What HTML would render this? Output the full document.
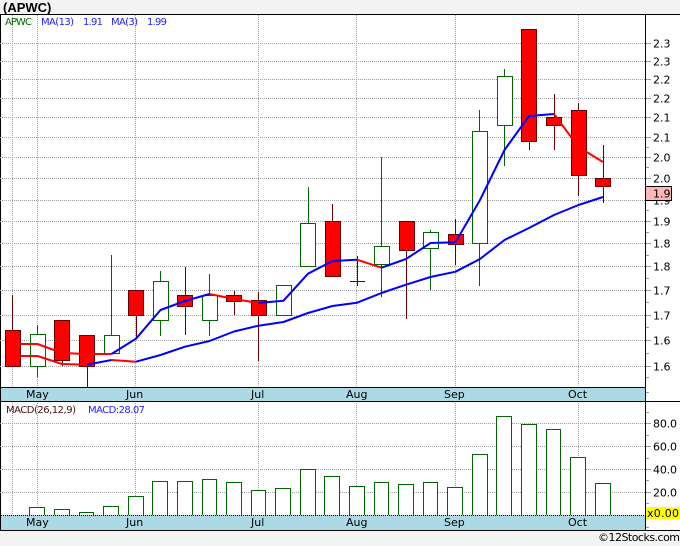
<!DOCTYPE html>
<html><head><meta charset="utf-8"><style>
html,body{margin:0;padding:0;background:#f3f3f3;width:680px;height:546px;overflow:hidden}
svg{display:block}
text{font-family:"DejaVu Sans","Liberation Sans",sans-serif;font-size:11px;fill:#000}
</style></head><body>
<svg width="680" height="546" viewBox="0 0 680 546" xmlns="http://www.w3.org/2000/svg">
<rect width="680" height="546" fill="#f3f3f3"/>
<rect x="0" y="14" width="680" height="517" fill="#fff"/>
<g shape-rendering="crispEdges">
<path d="M0.5 14V531" stroke="#000"/>
<path d="M12.5 15V387M37.5 15V387M135.5 15V387M258.5 15V387M356.5 15V387M455.5 15V387M578.5 15V387M12.5 401V515M37.5 401V515M135.5 401V515M258.5 401V515M356.5 401V515M455.5 401V515M578.5 401V515" stroke="#a0a0a0" stroke-dasharray="1 1" fill="none"/>
<path d="M0 43.5H645M0 61.5H645M0 79.5H645M0 98.5H645M0 117.5H645M0 137.5H645M0 157.5H645M0 178.5H645M0 200.5H645M0 221.5H645M0 243.5H645M0 266.5H645M0 290.5H645M0 315.5H645M0 340.5H645M0 366.5H645M0 423.5H645M0 446.5H645M0 469.5H645M0 492.5H645" stroke="#a0a0a0" stroke-dasharray="1 1" fill="none"/>
<path d="M645 43.5h6M645 61.5h6M645 79.5h6M645 98.5h6M645 117.5h6M645 137.5h6M645 157.5h6M645 178.5h6M645 221.5h6M645 243.5h6M645 266.5h6M645 290.5h6M645 315.5h6M645 340.5h6M645 366.5h6M645 423.5h6M645 446.5h6M645 469.5h6M645 492.5h6M645 147.5h4M645 167.5h4M645 210.5h4M645 232.5h4M645 255.5h4M645 278.5h4M645 302.5h4M645 327.5h4M645 353.5h4M645 377.5h4M645 392.5h4M645 412.5h4M645 435.5h4M645 458.5h4M645 480.5h4M645 503.5h4M645 527.5h4" stroke="#999" fill="none"/>

<!-- wicks -->
<path d="M12.5 295V330M62.5 360V366M87.5 367V387M136.5 315V338M185.5 267V295M185.5 306V335M234.5 291V295M234.5 301V315M258.5 292V300M258.5 315V361M332.5 204V221M357.5 256V286M350 281.5H365M406.5 250V319M455.5 219V234M455.5 244V265M529.5 141V150M554.5 94V117M554.5 125V150M578.5 103V110M578.5 175V196M603.5 145V178M603.5 186V203" stroke="#600" fill="none"/>
<path d="M37.5 325V334M37.5 367V377M111.5 255V335M160.5 271V281M160.5 320V336M209.5 274V295M209.5 320V336M308.5 187V223M381.5 157V246M381.5 264V297M430.5 230V232M430.5 248V290M479.5 110V131M479.5 243V286M504.5 69V76M504.5 125V166" stroke="#060" fill="none"/>

<!-- red bodies -->
<g fill="#f00" stroke="#600">
<rect x="5.5" y="330.5" width="15" height="36"/>
<rect x="54.5" y="320.5" width="15" height="40"/>
<rect x="79.5" y="335.5" width="15" height="31"/>
<rect x="128.5" y="290.5" width="15" height="25"/>
<rect x="177.5" y="295.5" width="15" height="11"/>
<rect x="226.5" y="295.5" width="15" height="6"/>
<rect x="251.5" y="300.5" width="15" height="15"/>
<rect x="325.5" y="221.5" width="15" height="55"/>
<rect x="399.5" y="221.5" width="15" height="29"/>
<rect x="448.5" y="234.5" width="15" height="10"/>
<rect x="521.5" y="29.5" width="15" height="112"/>
<rect x="546.5" y="117.5" width="15" height="8"/>
<rect x="571.5" y="110.5" width="15" height="65"/>
<rect x="595.5" y="178.5" width="15" height="8"/>
</g>
<!-- green bodies -->
<g fill="#fff" stroke="#060">
<rect x="30.5" y="334.5" width="15" height="32"/>
<rect x="104.5" y="335.5" width="15" height="18"/>
<rect x="153.5" y="281.5" width="15" height="39"/>
<rect x="202.5" y="295.5" width="15" height="25"/>
<rect x="276.5" y="285.5" width="15" height="30"/>
<rect x="300.5" y="223.5" width="15" height="43"/>
<rect x="374.5" y="246.5" width="15" height="18"/>
<rect x="423.5" y="232.5" width="15" height="16"/>
<rect x="472.5" y="131.5" width="15" height="112"/>
<rect x="497.5" y="76.5" width="15" height="49"/>
</g>
<!-- MACD bars -->
<path d="M29.5 515V507.5H44.5V515M54.5 515V509.5H69.5V515M79.5 515V512.5H93.5V515M103.5 515V506.5H118.5V515M128.5 515V496.5H143.5V515M152.5 515V481.5H167.5V515M177.5 515V481.5H192.5V515M202.5 515V479.5H216.5V515M226.5 515V482.5H241.5V515M251.5 515V490.5H265.5V515M275.5 515V488.5H290.5V515M300.5 515V469.5H315.5V515M324.5 515V476.5H339.5V515M349.5 515V486.5H364.5V515M374.5 515V482.5H388.5V515M398.5 515V484.5H413.5V515M423.5 515V482.5H437.5V515M447.5 515V487.5H462.5V515M472.5 515V454.5H487.5V515M496.5 515V416.5H511.5V515M521.5 515V424.5H536.5V515M546.5 515V429.5H560.5V515M570.5 515V457.5H585.5V515M595.5 515V483.5H610.5V515" fill="#fff" stroke="#060"/>

<!-- bands -->
<rect x="1" y="387" width="644" height="14" fill="#add8e6"/>
<rect x="1" y="515" width="644" height="15" fill="#add8e6"/>
<path d="M1 387.5H645M0 401.5H680" stroke="#000" fill="none"/>
<path d="M1 515.5H645" stroke="#000" stroke-dasharray="1 1" fill="none"/>
<path d="M0 14.5H680M0 530.5H680M645.5 14V531" stroke="#000" fill="none"/>
</g>

<!-- MA lines -->
<g fill="none" stroke-width="2" stroke-linejoin="round">
<path d="M12.7 344L37.5 344L62 353L87 354L111.5 354" stroke="#f00"/>
<path d="M12.7 356L37.5 356L62 364L87 364.7" stroke="#f00"/>
<path d="M87 364.7L111.5 360" stroke="#00f"/>
<path d="M111.5 360L136 361.7" stroke="#f00"/>
<path d="M136 361.7L160.5 355L185 346.7L209.5 341L234 331.5L258.5 325.7L283.5 322L308 313L332.5 306L357 302.7L381.5 293L406 284.7L430.5 277L455.5 271.7L480 259L504.5 240L529 228L554 215L578.5 205L603 197" stroke="#00f"/>
<path d="M111.5 354L136 338.7L160.5 310L185 301L209.5 294" stroke="#00f"/>
<path d="M209.5 294L234 299L258.5 303" stroke="#f00"/>
<path d="M258.5 303L283.5 300.7L308 273.7L332.5 261L357 259.7" stroke="#00f"/>
<path d="M357 259.7L381.5 267.7" stroke="#f00"/>
<path d="M381.5 267.7L406 259L430.5 243L455.5 242.3L480 200L504.5 150L529 116L554 114" stroke="#00f"/>
<path d="M554 114L578.5 147L603 162" stroke="#f00"/>
</g>

<!-- title -->
<text x="3" y="12" style="font-family:'Liberation Sans',sans-serif;font-size:13px;font-weight:bold">(APWC)</text>

<!-- legend -->
<text x="5" y="25" textLength="27" style="font-size:10px;fill:#060">APWC</text>
<text x="41" y="25" textLength="33" style="font-size:10px;fill:#22f">MA(13)</text>
<text x="83" y="25" textLength="20" style="font-size:10px;fill:#22f">1.91</text>
<text x="111" y="25" textLength="27" style="font-size:10px;fill:#22f">MA(3)</text>
<text x="147" y="25" textLength="20" style="font-size:10px;fill:#22f">1.99</text>
<text x="6" y="413" textLength="70" style="font-size:10px;fill:#411">MACD(26,12,9)</text>
<text x="88" y="413" textLength="57" style="font-size:10px;fill:#22f">MACD:28.07</text>

<!-- y labels -->
<text x="653" y="47.5">2.3</text>
<text x="653" y="65.5">2.3</text>
<text x="653" y="83.5">2.2</text>
<text x="653" y="102.5">2.2</text>
<text x="653" y="121.5">2.1</text>
<text x="653" y="141.5">2.1</text>
<text x="653" y="161.5">2.0</text>
<text x="653" y="182.5">2.0</text>
<text x="653" y="204.5">1.9</text>
<text x="653" y="225.5">1.9</text>
<text x="653" y="247.5">1.8</text>
<text x="653" y="270.5">1.8</text>
<text x="653" y="294.5">1.7</text>
<text x="653" y="319.5">1.7</text>
<text x="653" y="344.5">1.6</text>
<text x="653" y="370.5">1.6</text>
<text x="653" y="427.5" textLength="24">80.0</text>
<text x="653" y="450.5" textLength="24">60.0</text>
<text x="653" y="473.5" textLength="24">40.0</text>
<text x="653" y="496.5" textLength="24">20.0</text>

<!-- price box -->
<rect x="645.5" y="186.5" width="26" height="14" fill="#ffb6b6" stroke="#000" shape-rendering="crispEdges"/>
<text x="653" y="197.5">1.9</text>
<rect x="646" y="507" width="34" height="12" fill="#ff0" shape-rendering="crispEdges"/>
<text x="647" y="517" textLength="32">x0.00</text>

<!-- month labels -->
<g>
<text x="26" y="398">May</text><text x="126" y="398">Jun</text><text x="251" y="398">Jul</text><text x="346" y="398">Aug</text><text x="444" y="398">Sep</text><text x="568" y="398">Oct</text>
<text x="26" y="526">May</text><text x="126" y="526">Jun</text><text x="251" y="526">Jul</text><text x="346" y="526">Aug</text><text x="444" y="526">Sep</text><text x="568" y="526">Oct</text>
</g>

<text x="598" y="541" textLength="82" style="font-size:11px">©12Stocks.com</text>
</svg>
</body></html>
